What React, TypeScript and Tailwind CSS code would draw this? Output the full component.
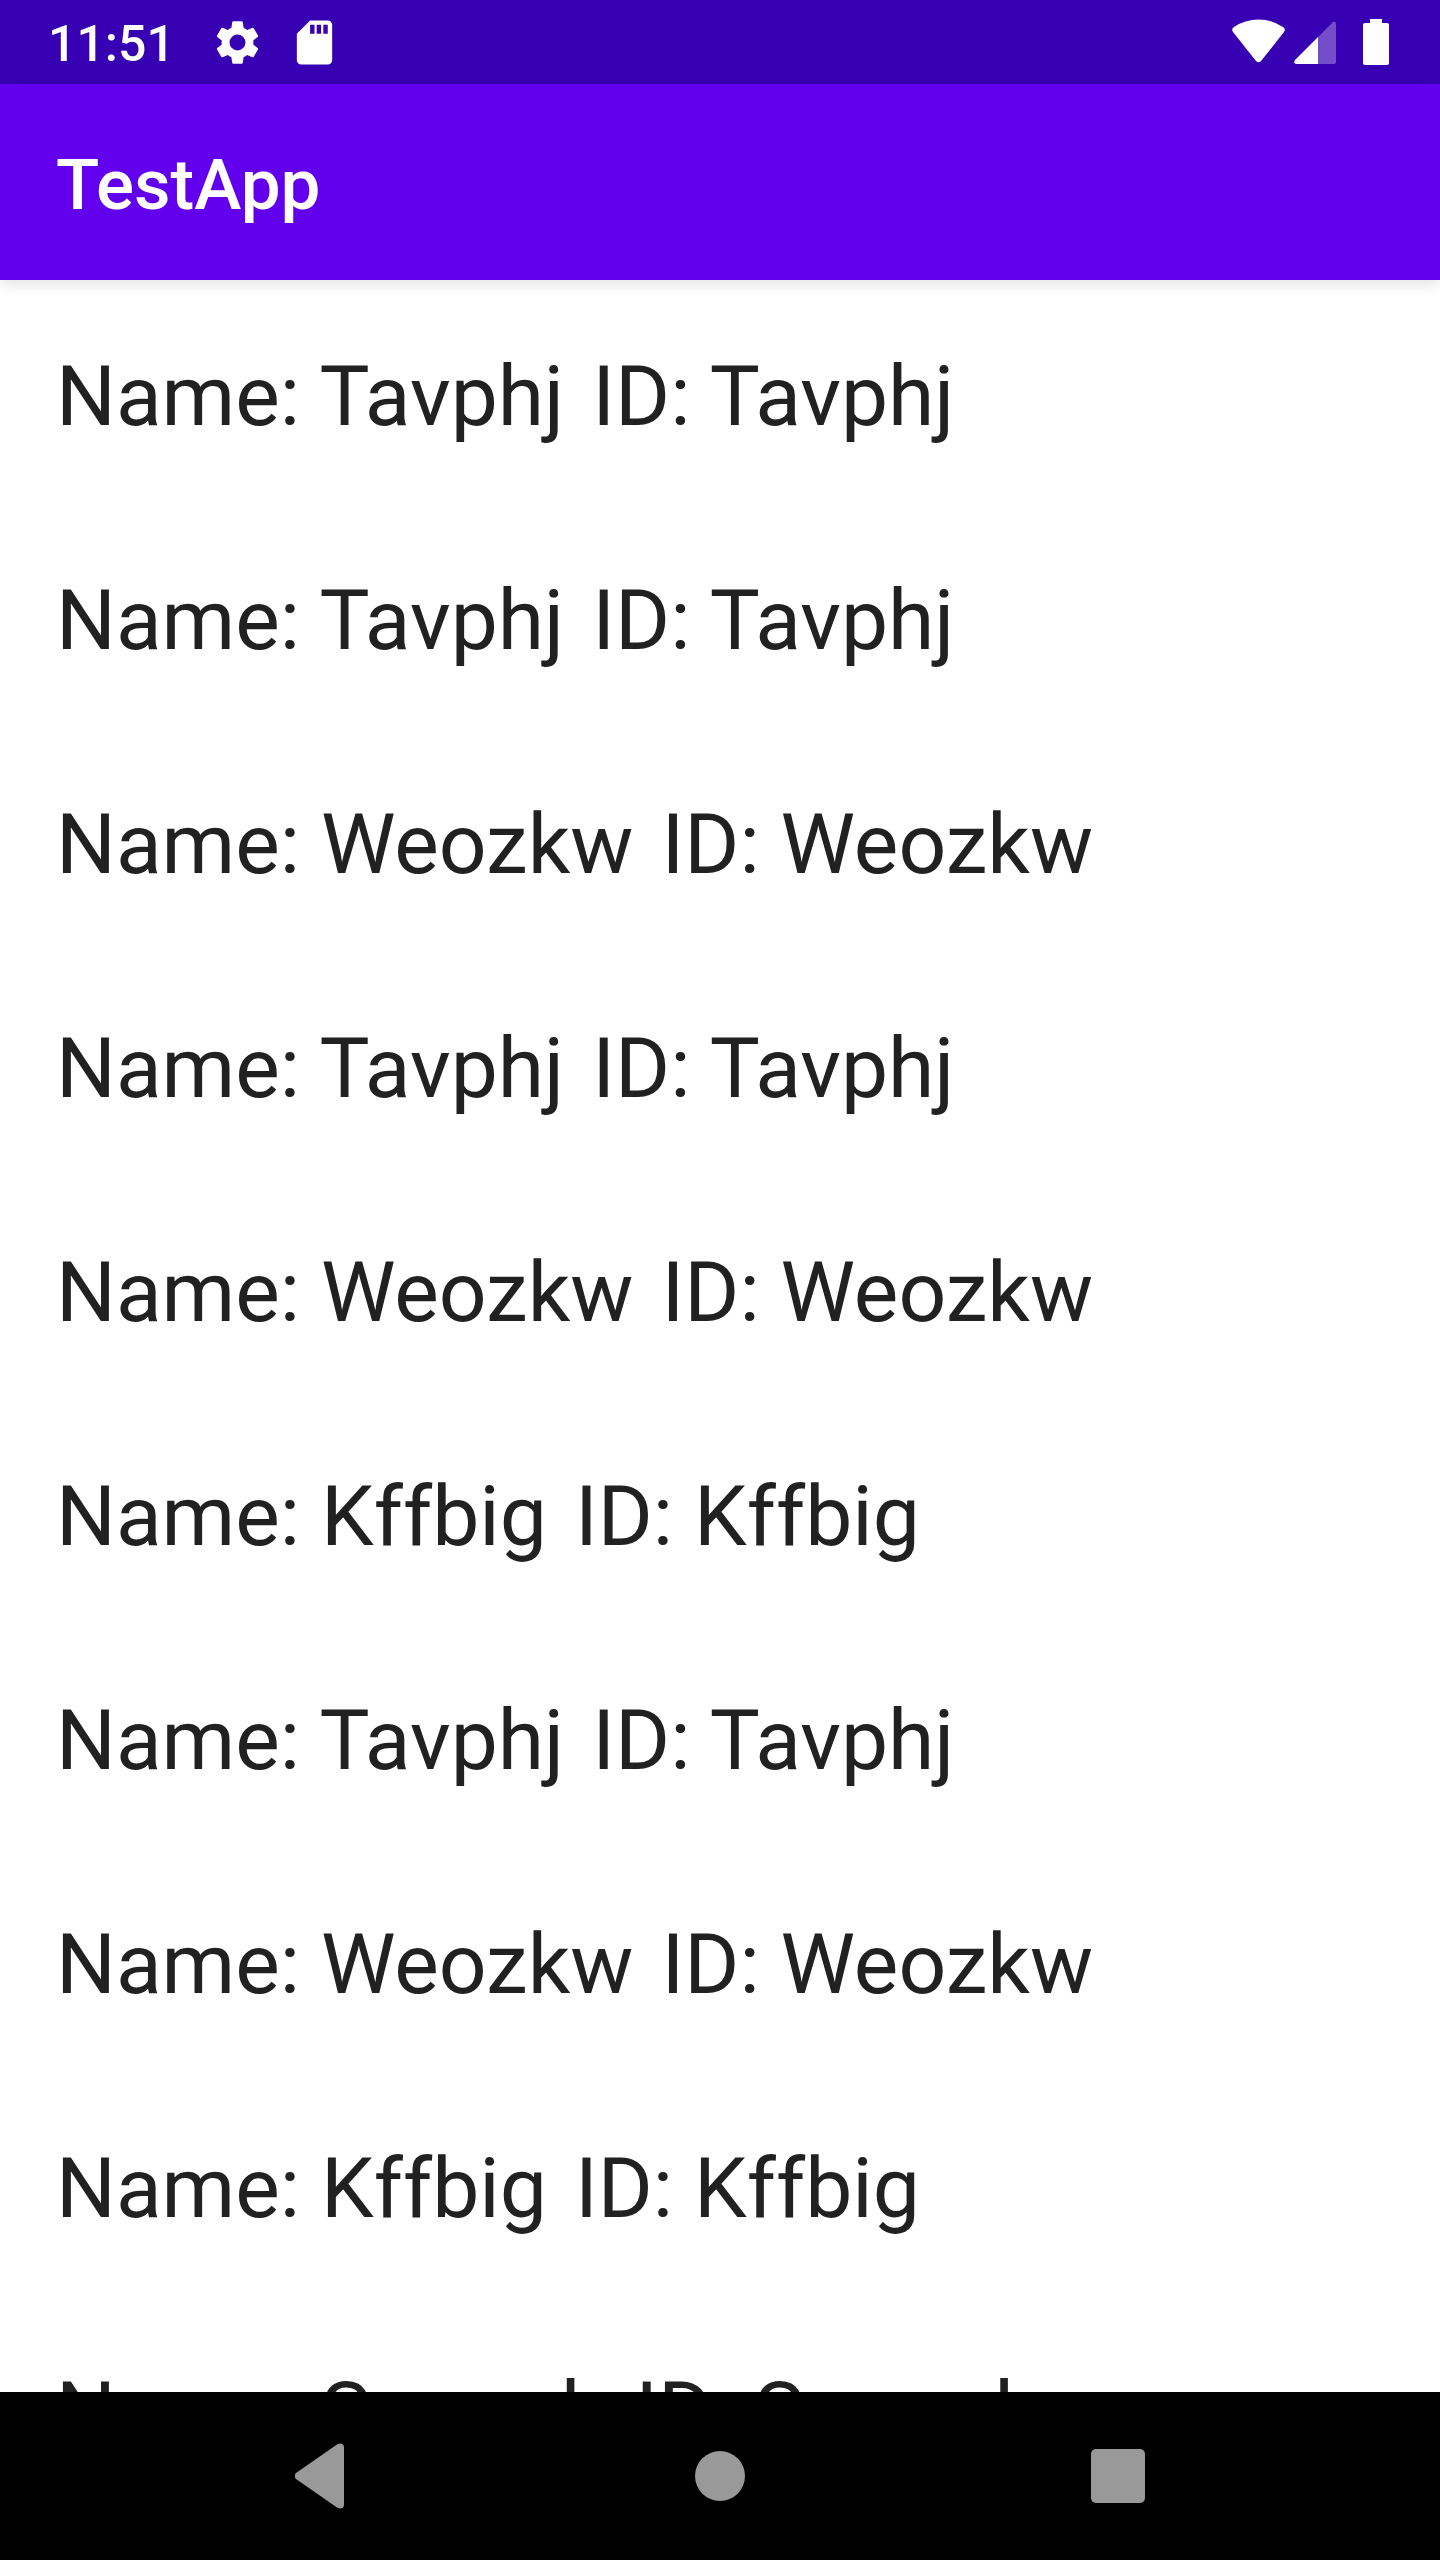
const names = ["Tavphj", "Tavphj", "Weozkw", "Tavphj", "Weozkw", "Kffbig", "Tavphj", "Weozkw", "Kffbig", "Soonoh"];

function StatusBar() {
  return (
    <div className="flex h-[84px] shrink-0 items-center justify-between bg-[#3700b3] pr-[51px] pl-12 text-white">
      <div className="flex items-center">
        <span className="pt-1 text-[50px] leading-[80px] font-medium">11:51</span>
        <svg className="ml-9 h-[53px] w-[53px]" viewBox="0 0 24 24" fill="currentColor" aria-label="Settings">
          <path d="M19.14 12.94c.04-.3.06-.61.06-.94s-.02-.64-.07-.94l2.03-1.58c.18-.14.23-.41.12-.61l-1.92-3.32c-.12-.22-.37-.29-.59-.22l-2.39.96c-.5-.38-1.03-.7-1.62-.94l-.36-2.54A.48.48 0 0 0 13.92 2.400h-3.84c-.24 0-.43.17-.47.41l-.36 2.54c-.59.24-1.13.57-1.62.94l-2.39-.96c-.22-.08-.47 0-.59.22L2.740 8.870c-.12.21-.08.47.12.61l2.03 1.58c-.05.3-.09.63-.09.94s.02.64.07.94l-2.03 1.58c-.18.14-.23.41-.12.61l1.92 3.32c.12.22.37.29.59.22l2.39-.96c.5.38 1.03.7 1.62.94l.36 2.54c.05.24.24.41.48.41h3.84c.24 0 .44-.17.47-.41l.36-2.54c.59-.24 1.13-.56 1.62-.94l2.39.96c.22.08.47 0 .59-.22l1.92-3.32c.12-.22.07-.47-.12-.61l-2.01-1.58zM12 15.600A3.600 3.600 0 1 1 12 8.400a3.600 3.600 0 0 1 0 7.200z" />
        </svg>
        <svg className="ml-6 h-[53px] w-[53px]" viewBox="0 0 24 24" fill="currentColor" aria-label="SD card">
          <path d="M18 2h-8L4 8v12c0 1.100.9 2 2 2h12c1.100 0 2-.9 2-2V4c0-1.100-.9-2-2-2zm-6 6h-2V4h2v4zm3 0h-2V4h2v4zm3 0h-2V4h2v4z" />
        </svg>
      </div>
      <div className="flex items-center">
        <svg className="h-[46px] w-[53px]" viewBox="0 0 53 46" fill="currentColor" aria-label="Wi-Fi">
          <path d="M1 13Q-1 10 2 8Q13 .5 26.500 .5T51 8Q54 10 52 13L29 42Q26.500 44.500 24 42Z" />
        </svg>
        <svg className="ml-2 h-[46px] w-[43px]" viewBox="0 0 43 46" fill="currentColor" aria-label="Mobile signal">
          <path d="M25 18V45H3Q0 44 2 41Z" />
          <path d="M25 18L40 3Q43 2 43 5V43Q43 45 41 45H25Z" opacity="0.3" />
        </svg>
        <svg className="ml-[27px] h-[46px] w-[26px]" viewBox="0 0 26 46" fill="currentColor" aria-label="Battery">
          <path d="M7 0H19V4H24Q26 4 26 6V44Q26 46 24 46H2Q0 46 0 44V6Q0 4 2 4H7Z" />
        </svg>
      </div>
    </div>
  );
}

function NavigationBar() {
  return (
    <nav className="flex h-[168px] shrink-0 items-center justify-center gap-[230px] bg-black text-[#999999]">
      <button aria-label="Back" className="flex h-[168px] w-[168px] items-center justify-center">
        <svg className="h-[66px] w-[54px]" viewBox="0 0 54 66" fill="currentColor">
          <path d="M1 30L42 1.500Q48-1.500 49 4V62Q48 67.500 42 64.500L1 36Q-2 33 1 30Z" />
        </svg>
      </button>
      <button aria-label="Home" className="flex h-[168px] w-[168px] items-center justify-center">
        <span className="h-[50px] w-[50px] rounded-full bg-current" />
      </button>
      <button aria-label="Overview" className="flex h-[168px] w-[168px] items-center justify-center">
        <span className="h-[54px] w-[54px] rounded-[5px] bg-current" />
      </button>
    </nav>
  );
}

export default function App() {
  return (
    <div className="flex h-screen flex-col overflow-hidden bg-white font-['Roboto',sans-serif]">
      <StatusBar />
      <header className="relative z-10 flex h-[196px] shrink-0 items-center bg-[#6200ee] px-14 pt-1.5 shadow-[0_4px_14px_rgba(0,0,0,0.12)]">
        <h1 className="text-[71px] leading-[84px] font-medium text-white">TestApp</h1>
      </header>
      <ul className="min-h-0 flex-1 overflow-hidden text-[84px] leading-[114px] text-[#212121]">
        {names.map((name, i) => (
          <li key={i} className="flex gap-7 px-14 pt-[60px] pb-[50px] whitespace-nowrap">
            <span>Name: {name}</span>
            <span>ID: {name}</span>
          </li>
        ))}
      </ul>
      <NavigationBar />
    </div>
  );
}
